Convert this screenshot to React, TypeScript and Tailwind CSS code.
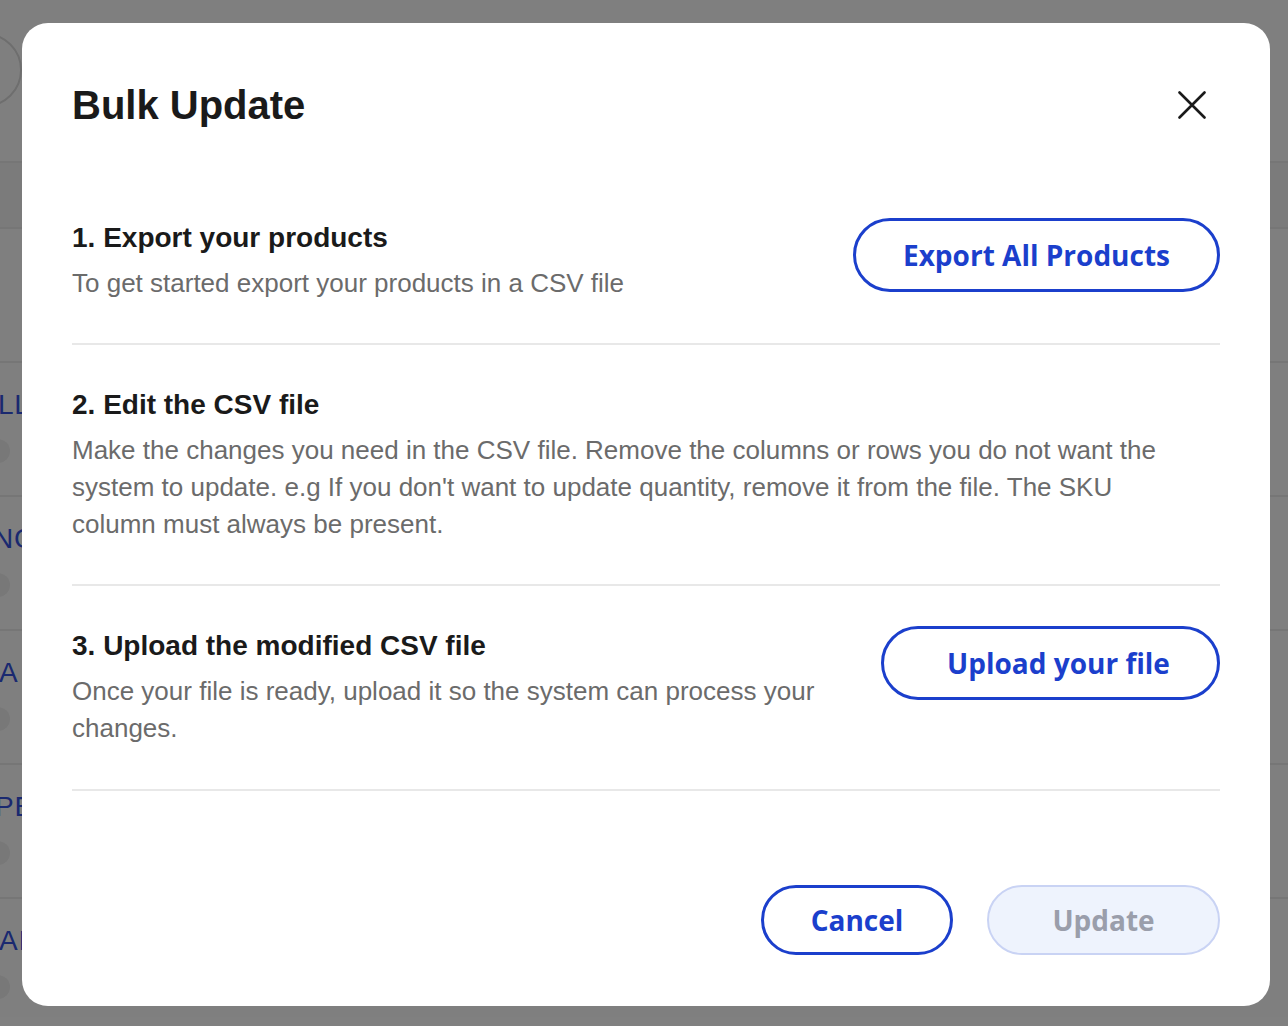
const rows = [
  { label: "LL", offset: "ml-[-2px]" },
  { label: "NG", offset: "ml-[-7px]" },
  { label: "A", offset: "ml-[-1px]" },
  { label: "PE", offset: "ml-[-5px]" },
  { label: "AI", offset: "ml-[-1px]" },
];

function BackgroundPage() {
  return (
    <div className="absolute inset-0 bg-white">
      <div className="h-[163px] border-b-2 border-[#ececec] pt-[33px]">
        <div className="ml-[-52px] h-[74px] w-[74px] rounded-full border-2 border-[#dcdcdc]" />
      </div>
      <div className="h-[66px] border-b-2 border-[#ececec] bg-[#f7f7f7]" />
      <div className="h-[134px] border-b-2 border-[#ececec]" />
      {rows.map((r) => (
        <div key={r.label} className="flex h-[134px] flex-col gap-[18px] border-b-2 border-[#ececec] pt-[26px]">
          <span
            className={`${r.offset} whitespace-nowrap text-[28px] leading-[32px] tracking-wide text-[#3552e0] [font-family:'Liberation_Sans',Arial,sans-serif]`}
          >
            {r.label}
          </span>
          <div className="ml-[-24px] h-[24px] w-[34px] rounded-full bg-[#f0f0f0]" />
        </div>
      ))}
    </div>
  );
}

function OutlineButton({ label, className }: { label: string; className: string }) {
  return (
    <button
      type="button"
      className={`${className} flex h-[74px] shrink-0 items-center justify-center rounded-full border-[3px] border-[#1b3fcc] text-[28px] font-bold text-[#1b3fcc] [font-family:'Open_Sans',sans-serif]`}
    >
      {label}
    </button>
  );
}

export default function App() {
  return (
    <div className="relative h-[1026px] w-[1288px] overflow-hidden [font-family:'Liberation_Sans',Arial,sans-serif]">
      <BackgroundPage />
      <div className="absolute inset-0 bg-black/50" />

      <div className="absolute left-[22px] top-[23px] flex h-[983px] w-[1248px] flex-col rounded-[26px] bg-white px-[50px]">
        <div className="flex items-center justify-between pt-[58px]">
          <h1 className="text-[40px] font-bold leading-[48px] text-[#1a1a1a]">Bulk Update</h1>
          <button type="button" className="mr-[14px] text-[#1a1a1a]">
            <svg width="28" height="28" viewBox="0 0 28 28" fill="none" stroke="currentColor" strokeWidth="2.6" strokeLinecap="round">
              <path d="M1.5 1.5 26.5 26.5M26.5 1.5 1.5 26.5" />
            </svg>
          </button>
        </div>

        <div className="mt-[49px] flex items-start justify-between gap-[40px] border-b-2 border-[#e8e8e8] pb-[41px] pt-[40px]">
          <div className="pt-[2px]">
            <h2 className="text-[28px] font-bold leading-[36px] text-[#1a1a1a]">1. Export your products</h2>
            <p className="mt-[9px] text-[26px] leading-[37px] text-[#6b6b6b]">
              To get started export your products in a CSV file
            </p>
          </div>
          <OutlineButton label="Export All Products" className="w-[367px]" />
        </div>

        <div className="border-b-2 border-[#e8e8e8] pb-[41px] pt-[42px]">
          <h2 className="text-[28px] font-bold leading-[36px] text-[#1a1a1a]">2. Edit the CSV file</h2>
          <p className="mt-[9px] max-w-[1110px] text-[26px] leading-[37px] text-[#6b6b6b]">
            Make the changes you need in the CSV file. Remove the columns or rows you do not want the system to
            update. e.g If you don't want to update quantity, remove it from the file. The SKU column must always be
            present.
          </p>
        </div>

        <div className="flex items-start justify-between gap-[40px] border-b-2 border-[#e8e8e8] pb-[42px] pt-[40px]">
          <div className="flex-1 pt-[2px]">
            <h2 className="text-[28px] font-bold leading-[36px] text-[#1a1a1a]">3. Upload the modified CSV file</h2>
            <p className="mt-[9px] text-[26px] leading-[37px] text-[#6b6b6b]">
              Once your file is ready, upload it so the system can process your changes.
            </p>
          </div>
          <OutlineButton label="Upload your file" className="w-[339px] pl-[16px]" />
        </div>

        <div className="flex justify-end gap-[34px] pt-[94px] [font-family:'Open_Sans',sans-serif]">
          <button
            type="button"
            className="h-[70px] w-[192px] rounded-full border-[3px] border-[#1b3fcc] text-[28px] font-bold text-[#1b3fcc]"
          >
            Cancel
          </button>
          <button
            type="button"
            disabled
            className="h-[70px] w-[233px] rounded-full border-2 border-[#c9d3f4] bg-[#eef3fd] text-[28px] font-bold text-[#9a9eab]"
          >
            Update
          </button>
        </div>
      </div>
    </div>
  );
}
